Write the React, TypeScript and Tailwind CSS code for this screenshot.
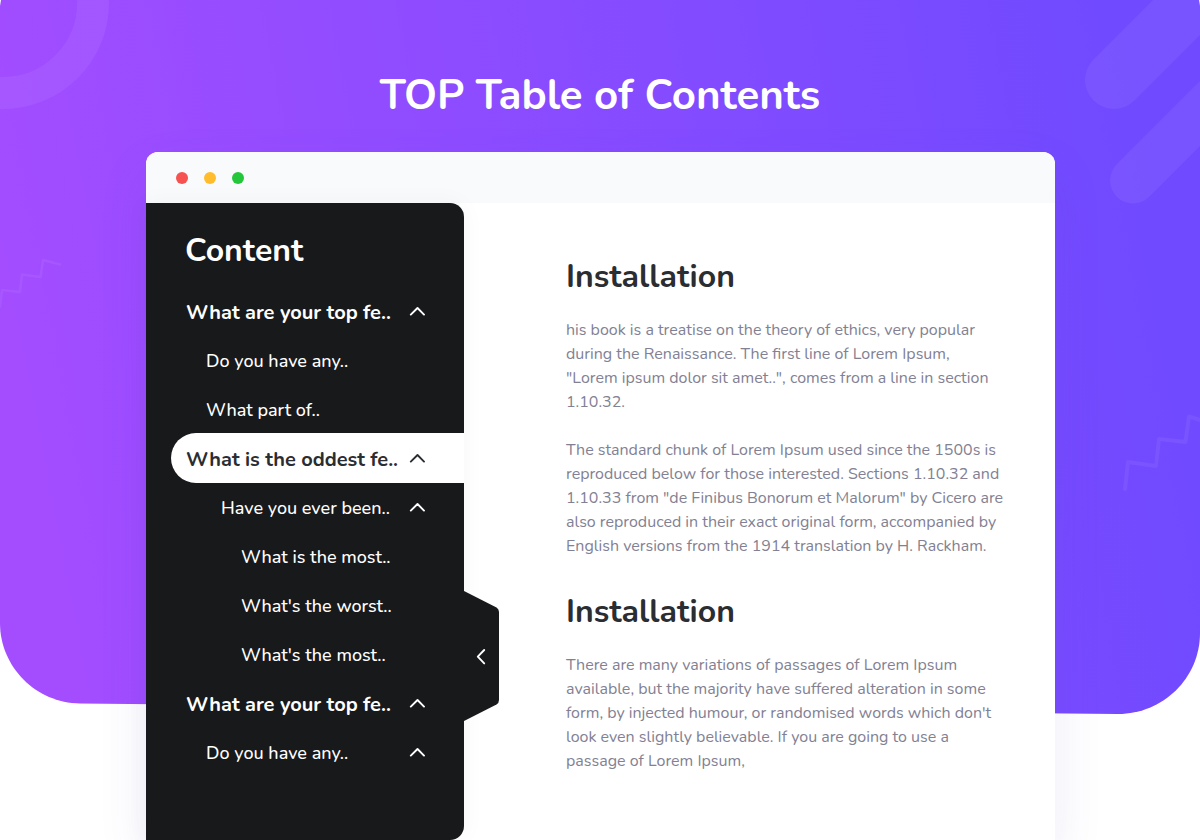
import { useState } from "react";

type Entry = {
  label: string;
  pad: string;
  heading?: boolean;
  chevron?: boolean;
};

const entries: Entry[] = [
  { label: "What are your top fe..", pad: "pl-[15px]", heading: true, chevron: true },
  { label: "Do you have any..", pad: "pl-[35px]" },
  { label: "What part of..", pad: "pl-[35px]" },
  { label: "What is the oddest fe..", pad: "pl-[15px]", heading: true, chevron: true },
  { label: "Have you ever been..", pad: "pl-[50px]", chevron: true },
  { label: "What is the most..", pad: "pl-[70px]" },
  { label: "What's the worst..", pad: "pl-[70px]" },
  { label: "What's the most..", pad: "pl-[70px]" },
  { label: "What are your top fe..", pad: "pl-[15px]", heading: true, chevron: true },
  { label: "Do you have any..", pad: "pl-[35px]", chevron: true },
];

const sections = [
  {
    title: "Installation",
    paragraphs: [
      `his book is a treatise on the theory of ethics, very popular
during the Renaissance. The first line of Lorem Ipsum,
"Lorem ipsum dolor sit amet..", comes from a line in section
1.10.32.`,
      `The standard chunk of Lorem Ipsum used since the 1500s is
reproduced below for those interested. Sections 1.10.32 and
1.10.33 from "de Finibus Bonorum et Malorum" by Cicero are
also reproduced in their exact original form, accompanied by
English versions from the 1914 translation by H. Rackham.`,
    ],
  },
  {
    title: "Installation",
    paragraphs: [
      `There are many variations of passages of Lorem Ipsum
available, but the majority have suffered alteration in some
form, by injected humour, or randomised words which don't
look even slightly believable. If you are going to use a
passage of Lorem Ipsum,`,
    ],
  },
];

function Backdrop() {
  return (
    <svg
      className="absolute inset-x-0 top-0 h-[716px] w-full"
      viewBox="0 0 1200 716"
      preserveAspectRatio="none"
      aria-hidden="true"
    >
      <defs>
        <linearGradient id="violet" gradientUnits="userSpaceOnUse" x1="30" y1="400" x2="1170" y2="180">
          <stop offset="0" stopColor="#a34dff" />
          <stop offset="1" stopColor="#6f4aff" />
        </linearGradient>
        <clipPath id="panel">
          <path d="M1 0H1199L1200 6V633C1200 678 1163 714 1118 714L80 703.500C36 703 0 667 0 623V6Z" />
        </clipPath>
      </defs>
      <g clipPath="url(#panel)">
        <rect width="1200" height="716" fill="url(#violet)" />
        <g fill="none" stroke="#fff" strokeOpacity="0.06" strokeLinecap="round" strokeLinejoin="round">
          <circle cx="3" cy="3" r="90" strokeWidth="32" />
          <path d="M1114 80L1234 -40" strokeWidth="58" />
          <path d="M1133 180.500L1253 60.500" strokeWidth="46" />
          <path d="M60 264.500L43 260L40.500 277L22 274.500L20 292L2 290L0 307" strokeWidth="2.500" />
          <path d="M1125 489L1128 462L1156 466L1159 439L1185.500 442L1189 416.500L1204 421" strokeWidth="4" />
        </g>
      </g>
    </svg>
  );
}

function ChevronUp() {
  return (
    <svg className="h-2.5 w-4 shrink-0" viewBox="0 0 16 10" fill="none" aria-hidden="true">
      <path d="M1.800 8.600L8.500 2L15 8.600" stroke="currentColor" strokeWidth="1.900" strokeLinecap="round" strokeLinejoin="round" />
    </svg>
  );
}

function Sidebar() {
  const [active, setActive] = useState(3);
  return (
    <aside className="relative w-[318px] shrink-0 rounded-r-[14px] bg-[#18191b] pt-7 shadow-[0_0_24px_rgba(30,30,60,0.04)]">
      <h2 className="pl-[39px] text-[32px] leading-10 font-bold text-white">Content</h2>
      <nav aria-label="Table of contents" className="mt-[15px] pl-[25px]">
        <ul>
          {entries.map((entry, i) => (
            <li key={i} className="h-[49px]">
              <button
                type="button"
                aria-current={i === active ? "true" : undefined}
                onClick={() => setActive(i)}
                className={`flex w-full items-center justify-between rounded-l-full pr-[39px] text-left whitespace-nowrap ${entry.pad} ${
                  entry.heading ? "text-[20px] font-bold" : "text-[18px] font-medium"
                } ${i === active ? "h-[50px] bg-white text-[#2a2d31]" : "h-[49px] text-white"}`}
              >
                <span className="mt-1">{entry.label}</span>
                {entry.chevron && <ChevronUp />}
              </button>
            </li>
          ))}
        </ul>
      </nav>
      <button type="button" aria-label="Collapse contents" className="absolute top-[388px] left-full h-[130px] w-[35px]">
        <svg className="h-full w-full" viewBox="0 0 35 130" fill="none" aria-hidden="true">
          <path d="M-1 -0.500L32.500 16.500Q35 18 35 21V109Q35 112 32.500 113.500L-1 130.500Z" fill="#18191b" />
          <path d="M20.200 59L13.800 65.700L20.200 72.400" stroke="#fff" strokeWidth="1.900" strokeLinecap="round" strokeLinejoin="round" />
        </svg>
      </button>
    </aside>
  );
}

export default function App() {
  return (
    <div className="relative flex min-h-screen flex-col overflow-hidden bg-white font-['Nunito','Lato',sans-serif]">
      <Backdrop />
      <h1 className="relative pt-[66px] text-center text-[42px] leading-[60px] font-bold text-white">TOP Table of Contents</h1>
      <div className="relative mt-[26px] flex flex-1 flex-col pr-[145px] pl-[146px]">
        <div className="flex flex-1 flex-col rounded-t-xl bg-white shadow-[0_20px_50px_rgba(75,65,185,0.1)]">
          <div className="flex h-[51px] items-center gap-4 rounded-t-xl bg-[#f9fafc] pl-[30px]">
            <span className="size-3 rounded-full bg-[#f6524f]" />
            <span className="size-3 rounded-full bg-[#ffbd2e]" />
            <span className="size-3 rounded-full bg-[#24c73c]" />
          </div>
          <div className="flex flex-1">
            <Sidebar />
            <main className="flex flex-1 flex-col gap-[34px] pt-[54px] pl-[102px]">
              {sections.map((section, i) => (
                <section key={i}>
                  <h2 className="text-[32px] leading-10 font-bold text-[#2a2d31]">{section.title}</h2>
                  <div className="mt-[21px] flex flex-col gap-6 text-base leading-6 whitespace-pre text-[#828193]">
                    {section.paragraphs.map((text, j) => (
                      <p key={j}>{text}</p>
                    ))}
                  </div>
                </section>
              ))}
            </main>
          </div>
        </div>
      </div>
    </div>
  );
}
